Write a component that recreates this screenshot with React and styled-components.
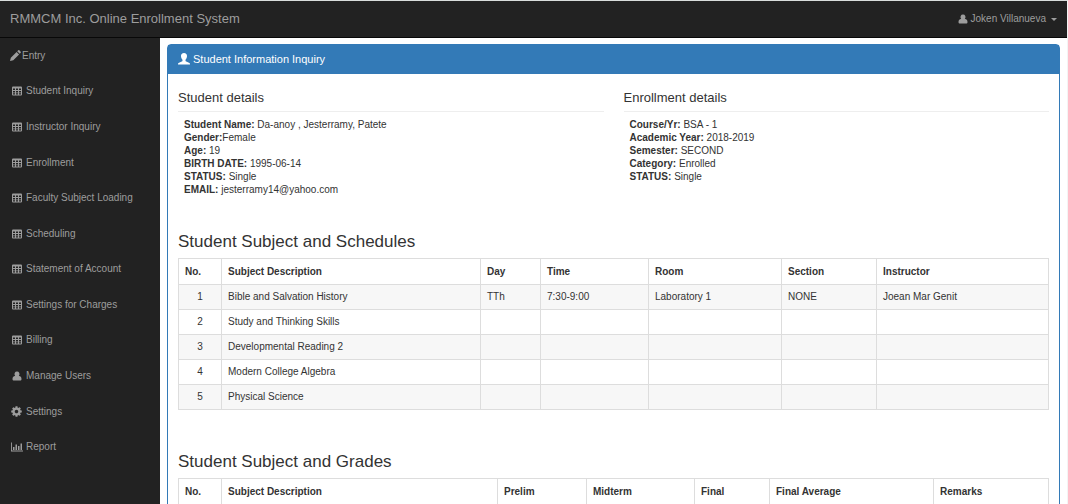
import React from 'react';
import styled, { createGlobalStyle } from 'styled-components'

const GlobalStyle = createGlobalStyle`
    * { box-sizing:border-box; }
    html { overflow:hidden; }
    body {
        margin:0; background:#fff; color:#333;
        font-family:"Liberation Sans", Arial, sans-serif;
        font-size:10px; line-height:14px;
    }
    ul { list-style:none; margin:0; padding:0; }
    a { color:inherit; text-decoration:none; }
`

const PageBlock = styled.div`
    display:flex; flex-direction:column;
    height:100vh;
    border-top:1px solid #d9dddc;
    border-right:1px solid #f4f4f4;
`

const NavBlock = styled.header`
    display:flex; align-items:center; justify-content:space-between;
    flex:0 0 37px; padding:0 10px;
    background:#222; color:#9d9d9d;
    border-bottom:1px solid #080808;
    .brand { font-size:13px; line-height:18px; }
`

const UserButton = styled.button`
    display:flex; align-items:center; gap:3px;
    padding:0; border:0; background:none; color:inherit;
    font:inherit; cursor:pointer;
    .caret {
        margin-left:2px;
        border-top:3px solid; border-left:3px solid transparent; border-right:3px solid transparent;
    }
`

const BodyBlock = styled.div`
    display:flex; flex:1; min-height:0;
`

const SideBlock = styled.nav`
    flex:0 0 160px;
    background:#222; color:#9d9d9d;
    ul { display:grid; grid-auto-rows:1fr; height:427px; }
    a { display:flex; align-items:center; height:100%; padding-left:10px; }
`

const IconBlock = styled.span`
    display:flex; justify-content:center;
    width:${({$wide})=>$wide ? '16px' : '12px'};
    padding-right:${({$wide})=>$wide ? '3px' : '1px'};
`

const MainBlock = styled.main`
    flex:1; min-width:0; overflow:hidden;
    padding:6px 7px 0;
`

const PanelBlock = styled.section`
    border:1px solid #337ab7; border-radius:4px;
`

const PanelHead = styled.h1`
    display:flex; align-items:center; gap:3px;
    margin:0; padding:6px 10px 7px;
    background:#337ab7; color:#fff;
    font-size:11px; line-height:16px; font-weight:normal;
`

const PanelBody = styled.div`
    padding:14px 10px;
`

const DetailRow = styled.div`
    display:grid; grid-template-columns:1fr 1fr; gap:20px;
    margin-bottom:35px;
`

const DetailBlock = styled.section`
    h2 {
        margin:0 0 6px; padding-bottom:3px;
        border-bottom:1px solid #eee;
        font-size:13px; line-height:20px; font-weight:normal;
    }
    dl { margin:0; padding-left:6px; line-height:13px; }
    dt { display:inline; font-weight:bold; }
    dd { display:inline; margin:0; }
`

const SectionTitle = styled.h2`
    margin:0 0 5px;
    font-size:17px; line-height:22px; font-weight:normal;
`

const TableBlock = styled.table`
    width:100%; margin-bottom:41px;
    table-layout:fixed; border-collapse:collapse;
    th, td {
        height:25px; padding:0 6px;
        border:1px solid #ddd;
        text-align:left;
    }
    th { height:26px; }
    td:first-child { text-align:center; }
    tbody tr:nth-child(odd) { background:#f7f7f7; }
`

const Col = styled.col`
    width:${({$w})=>$w ? `${$w}px` : 'auto'};
`

const Svg = ({ size=12, box='0 0 20 20', children }) => (
    <svg width={size} height={size} viewBox={box} fill="currentColor" aria-hidden="true">{children}</svg>
)

const UserIcon = () => (
    <Svg size={10}><path d="M10 1a5 5 0 0 1 3.700 8.400c3.300.7 5.300 3 5.300 6.600 0 2-1 3-3 3H4c-2 0-3-1-3-3 0-3.600 2-5.900 5.300-6.600A5 5 0 0 1 10 1z" /></Svg>
)

const CogIcon = () => (
    <Svg size={11} box="96 96 1600 1600"><path d="M1152 896q0-106-75-181t-181-75-181 75-75 181 75 181 181 75 181-75 75-181zm512-109v222q0 12-8 23t-20 13l-185 28q-19 54-39 91 35 50 107 138 10 12 10 25t-9 23q-27 37-99 108t-94 71q-12 0-26-9l-138-108q-44 23-91 38-16 136-29 186-7 28-36 28h-222q-14 0-24.5-8.5t-11.5-21.5l-28-184q-49-16-90-37l-141 107q-10 9-25 9-14 0-25-11-126-114-165-168-7-10-7-23 0-12 8-23 15-21 51-66.5t54-70.5q-27-50-41-99l-183-27q-13-2-21-12.5t-8-23.5v-222q0-12 8-23t19-13l186-28q14-46 39-92-40-57-107-138-10-12-10-24 0-10 9-23 26-36 98.5-107.500t94.500-71.500q13 0 26 10l138 107q44-23 91-38 16-136 29-186 7-28 36-28h222q14 0 24.500 8.500t11.500 21.500l28 184q49 16 90 37l142-107q9-9 24-9 13 0 25 10 129 119 165 170 7 8 7 22 0 12-8 23-15 21-51 66.500t-54 70.500q26 50 41 98l183 28q13 2 21 12.500t8 23.500z" /></Svg>
)

const TableIcon = () => (
    <Svg size={10}>
        <path fillRule="evenodd" d="M2 1h16a2 2 0 0 1 2 2v14a2 2 0 0 1-2 2H2a2 2 0 0 1-2-2V3a2 2 0 0 1 2-2zM2 5v3h4v-3zM8 5v3h4v-3zM14 5v3h4v-3zM2 9.800v3h4v-3zM8 9.800v3h4v-3zM14 9.800v3h4v-3zM2 14.500v2.500h4v-2.500zM8 14.500v2.500h4v-2.500zM14 14.500v2.500h4v-2.500z" />
    </Svg>
)

const PencilIcon = () => (
    <Svg size={11}><path d="M0 20l1.500-6L12 3.500 16.500 8 6 18.500zM13.200 2.300L15 .6q1-1 2 0L19.400 3q1 1 0 2l-1.700 1.800z" /></Svg>
)

const ChartIcon = () => (
    <Svg box="0 0 24 24"><path d="M0 3h1.800v16H24V21H0zM4 12h3v6H4zM9 7h3v11H9zM14 10h3v8h-3zM19 5h3v13h-3z" /></Svg>
)

const PersonIcon = () => (
    <Svg><path d="M10 0c3.300 0 5 2.200 5 5.200 0 2.500-1 4.800-2.500 6v1.600c0 .8.500 1.200 1.200 1.500l4.600 1.800c1 .4 1.700 1 1.700 2V19H0v-.9c0-1 .7-1.600 1.700-2l4.600-1.800c.7-.3 1.200-.7 1.200-1.500v-1.600C6 10 5 7.700 5 5.200 5 2.200 6.700 0 10 0z" /></Svg>
)

const menus = [
    { text:'Entry', Icon:PencilIcon, top:true },
    { text:'Student Inquiry', Icon:TableIcon },
    { text:'Instructor Inquiry', Icon:TableIcon },
    { text:'Enrollment', Icon:TableIcon },
    { text:'Faculty Subject Loading', Icon:TableIcon },
    { text:'Scheduling', Icon:TableIcon },
    { text:'Statement of Account', Icon:TableIcon },
    { text:'Settings for Charges', Icon:TableIcon },
    { text:'Billing', Icon:TableIcon },
    { text:'Manage Users', Icon:UserIcon },
    { text:'Settings', Icon:CogIcon },
    { text:'Report', Icon:ChartIcon }
]

const student = [
    ['Student Name:', ' Da-anoy , Jesterramy, Patete'],
    ['Gender:', 'Female'],
    ['Age:', ' 19'],
    ['BIRTH DATE:', ' 1995-06-14'],
    ['STATUS:', ' Single'],
    ['EMAIL:', ' jesterramy14@yahoo.com']
]

const enrollment = [
    ['Course/Yr:', ' BSA - 1'],
    ['Academic Year:', ' 2018-2019'],
    ['Semester:', ' SECOND'],
    ['Category:', ' Enrolled'],
    ['STATUS:', ' Single']
]

const scheduleCols = [
    { text:'No.', w:43 },
    { text:'Subject Description' },
    { text:'Day', w:60 },
    { text:'Time', w:108 },
    { text:'Room', w:133 },
    { text:'Section', w:95 },
    { text:'Instructor', w:172 }
]

const schedules = [
    ['1', 'Bible and Salvation History', 'TTh', '7:30-9:00', 'Laboratory 1', 'NONE', 'Joean Mar Genit'],
    ['2', 'Study and Thinking Skills', '', '', '', '', ''],
    ['3', 'Developmental Reading 2', '', '', '', '', ''],
    ['4', 'Modern College Algebra', '', '', '', '', ''],
    ['5', 'Physical Science', '', '', '', '', '']
]

const gradeCols = [
    { text:'No.', w:43 },
    { text:'Subject Description' },
    { text:'Prelim', w:89 },
    { text:'Midterm', w:108 },
    { text:'Final', w:75 },
    { text:'Final Average', w:164 },
    { text:'Remarks', w:115 }
]

const Details = ({ title, items }) => (
    <DetailBlock>
        <h2>{title}</h2>
        <dl>
            {
                items.map(([label, value])=>(
                    <div key={label}><dt>{label}</dt><dd>{value}</dd></div>
                ))
            }
        </dl>
    </DetailBlock>
)

const DataTable = ({ cols, rows=[] }) => (
    <TableBlock>
        <colgroup>
            { cols.map((col)=><Col key={col.text} $w={col.w} />) }
        </colgroup>
        <thead>
            <tr>{ cols.map((col)=><th key={col.text} scope="col">{col.text}</th>) }</tr>
        </thead>
        <tbody>
            {
                rows.map((row)=>(
                    <tr key={row[0]}>{ row.map((cell, index)=><td key={index}>{cell}</td>) }</tr>
                ))
            }
        </tbody>
    </TableBlock>
)

const App = () => {
    return (
        <PageBlock>
            <GlobalStyle />
            <NavBlock>
                <a className="brand" href="#">RMMCM Inc. Online Enrollment System</a>
                <UserButton type="button"><UserIcon />Joken Villanueva <span className="caret" /></UserButton>
            </NavBlock>
            <BodyBlock>
                <SideBlock>
                    <ul>
                        {
                            menus.map(({ text, Icon, top })=>(
                                <li key={text}><a href="#"><IconBlock $wide={!top}><Icon /></IconBlock>{text}</a></li>
                            ))
                        }
                    </ul>
                </SideBlock>
                <MainBlock>
                    <PanelBlock>
                        <PanelHead><PersonIcon />Student Information Inquiry</PanelHead>
                        <PanelBody>
                            <DetailRow>
                                <Details title="Student details" items={student} />
                                <Details title="Enrollment details" items={enrollment} />
                            </DetailRow>
                            <SectionTitle>Student Subject and Schedules</SectionTitle>
                            <DataTable cols={scheduleCols} rows={schedules} />
                            <SectionTitle>Student Subject and Grades</SectionTitle>
                            <DataTable cols={gradeCols} />
                        </PanelBody>
                    </PanelBlock>
                </MainBlock>
            </BodyBlock>
        </PageBlock>
    );
};

export default App;
